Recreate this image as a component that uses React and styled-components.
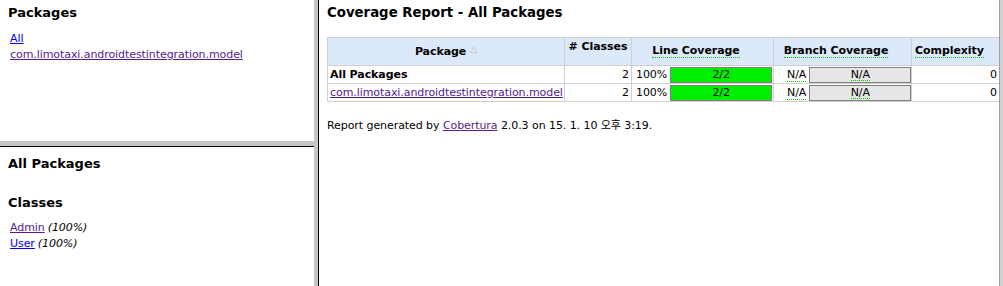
import React from "react";
import styled, { createGlobalStyle } from "styled-components";

const GlobalStyle = createGlobalStyle`
  html, body {
    margin: 0;
    padding: 0;
    background: #fff;
  }
  body {
    font-family: "DejaVu Sans", Verdana, "Noto Sans CJK KR", sans-serif;
    font-size: 11px;
    letter-spacing: -0.07px;
    color: #000;
  }
`;

const Page = styled.div`
  display: flex;
  width: 1003px;
  height: 286px;
  overflow: hidden;
`;

const LeftColumn = styled.div`
  display: flex;
  flex-direction: column;
  width: 314px;
  flex-shrink: 0;
`;

const Frame = styled.div`
  box-sizing: border-box;
  padding: ${(p) => p.$pad || "0 8px"};
  height: ${(p) => (p.$h ? `${p.$h}px` : "auto")};
  flex: ${(p) => (p.$h ? "0 0 auto" : "1")};
  overflow: hidden;
`;

const HSplit = styled.div`
  height: 5px;
  background: #c6c6c6;
  border-bottom: 1px solid #000;
  flex-shrink: 0;
`;

const VSplit = styled.div`
  width: 4px;
  background: #c6c6c6;
  border-right: 1px solid #000;
  flex-shrink: 0;
`;

const RightEdge = styled.div`
  width: 3px;
  background: #d0d0d0;
  border-left: 1px solid #a0a0a0;
  flex-shrink: 0;
`;

const MainFrame = styled.div`
  flex: 1;
  padding: 5px 0 0 8px;
  min-width: 0;
`;

const Heading = styled.h1`
  font-size: ${(p) => p.$size || 13}px;
  font-weight: bold;
  margin: ${(p) => p.$margin || "0"};
  line-height: 16px;
  letter-spacing: 0;
`;

const LinkList = styled.div`
  display: flex;
  flex-direction: column;
  padding-left: 2px;
  line-height: 16px;
`;

const Link = styled.a`
  color: ${(p) => (p.$visited ? "#551a8b" : "#0000ee")};
  text-decoration: underline;
  cursor: pointer;
`;

const Pct = styled.i`
  margin-left: 3px;
`;

const Table = styled.table`
  width: 672px;
  table-layout: fixed;
  border-collapse: collapse;
  margin-top: 16px;
  border: 1px solid #d0d0d0;
`;

const Th = styled.th`
  background: #dbe9fa;
  border: 1px solid #d0d0d0;
  font-weight: bold;
  padding: 2px ${(p) => p.$padRight || 3}px 4px 3px;
  height: 21px;
  vertical-align: ${(p) => p.$valign || "bottom"};
  text-align: ${(p) => p.$align || "center"};
  white-space: nowrap;
  overflow: hidden;
`;

const Td = styled.td`
  border: 1px solid #d0d0d0;
  padding: 0 2px;
  height: 17px;
  text-align: ${(p) => p.$align || "left"};
  font-weight: ${(p) => (p.$bold ? "bold" : "normal")};
  white-space: nowrap;
  overflow: hidden;
`;

const Tip = styled.span`
  border-bottom: 1px dotted #00cc00;
`;

const SortMark = styled.span`
  color: #b8b8b8;
  font-size: 9px;
  margin-left: 4px;
  vertical-align: 3px;
`;

const CoverageCell = styled.div`
  display: flex;
  align-items: center;
  gap: ${(p) => p.$gap || 4}px;
  padding-left: ${(p) => p.$indent || 0}px;
`;

const Bar = styled.div`
  box-sizing: border-box;
  width: 102px;
  height: 16px;
  border: 1px solid #808080;
  background: ${(p) => (p.$na ? "#e6e6e6" : "#00ee00")};
  display: flex;
  align-items: center;
  justify-content: center;
  line-height: 1;
  flex-shrink: 0;
`;

const Footer = styled.p`
  margin: 14px 0 0;
`;

const rows = [
  { name: "All Packages", bold: true, classes: 2 },
  { name: "com.limotaxi.androidtestintegration.model", link: true, classes: 2 },
];

export default function App() {
  return (
    <>
      <GlobalStyle />
      <Page>
        <LeftColumn>
          <Frame $h={141} $pad="5px 8px 0">
            <Heading $margin="0 0 10px">Packages</Heading>
            <LinkList>
              <Link>All</Link>
              <Link $visited>com.limotaxi.androidtestintegration.model</Link>
            </LinkList>
          </Frame>
          <HSplit />
          <Frame $pad="9px 8px 0">
            <Heading>All Packages</Heading>
            <Heading $margin="23px 0 9px">Classes</Heading>
            <LinkList>
              <span>
                <Link $visited>Admin</Link>
                <Pct>(100%)</Pct>
              </span>
              <span>
                <Link>User</Link>
                <Pct>(100%)</Pct>
              </span>
            </LinkList>
          </Frame>
        </LeftColumn>
        <VSplit />
        <MainFrame>
          <Heading $size={13.3}>Coverage Report - All Packages</Heading>
          <Table>
            <colgroup>
              <col style={{ width: 237 }} />
              <col style={{ width: 67 }} />
              <col style={{ width: 142 }} />
              <col style={{ width: 138 }} />
              <col style={{ width: 88 }} />
            </colgroup>
            <thead>
              <tr>
                <Th $valign="middle">
                  Package<SortMark>△</SortMark>
                </Th>
                <Th $valign="top"># Classes</Th>
                <Th $valign="middle" $padRight={16}>
                  <Tip>Line Coverage</Tip>
                </Th>
                <Th $valign="middle" $padRight={16}>
                  <Tip>Branch Coverage</Tip>
                </Th>
                <Th $valign="middle" $align="left">
                  <Tip>Complexity</Tip>
                </Th>
              </tr>
            </thead>
            <tbody>
              {rows.map((r) => (
                <tr key={r.name}>
                  <Td $bold={r.bold}>
                    {r.link ? <Link $visited>{r.name}</Link> : r.name}
                  </Td>
                  <Td $align="right">{r.classes}</Td>
                  <Td>
                    <CoverageCell $gap={3} $indent={2}>
                      <span>100%</span>
                      <Bar>2/2</Bar>
                    </CoverageCell>
                  </Td>
                  <Td>
                    <CoverageCell $gap={3} $indent={11}>
                      <Tip>N/A</Tip>
                      <Bar $na>
                        <Tip>N/A</Tip>
                      </Bar>
                    </CoverageCell>
                  </Td>
                  <Td $align="right">0</Td>
                </tr>
              ))}
            </tbody>
          </Table>
          <Footer>
            Report generated by <Link $visited>Cobertura</Link> 2.0.3 on 15. 1. 10 오후 3:19.
          </Footer>
        </MainFrame>
        <RightEdge />
      </Page>
    </>
  );
}
